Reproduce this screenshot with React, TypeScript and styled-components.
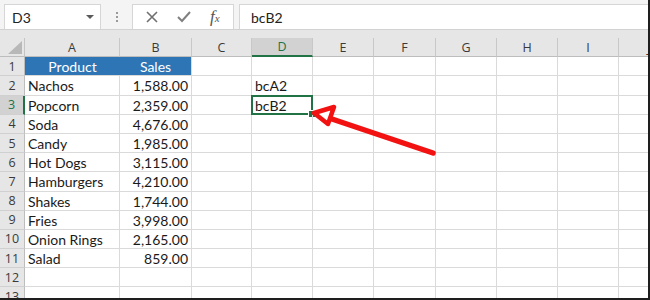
import styled, { createGlobalStyle } from 'styled-components';

const GlobalStyle = createGlobalStyle`
  * { box-sizing: border-box; }
  body {
    margin: 0;
    background: #fff;
    font-family: Lato, "Open Sans", sans-serif;
  }
`;

const columns = ['A', 'B', 'C', 'D', 'E', 'F', 'G', 'H', 'I', 'J'];
const colWidths = [95, 72, 60, 61, 61, 62, 61, 61, 61, 61];

const sales = [
  ['Nachos', '1,588.00'],
  ['Popcorn', '2,359.00'],
  ['Soda', '4,676.00'],
  ['Candy', '1,985.00'],
  ['Hot Dogs', '3,115.00'],
  ['Hamburgers', '4,210.00'],
  ['Shakes', '1,744.00'],
  ['Fries', '3,998.00'],
  ['Onion Rings', '2,165.00'],
  ['Salad', '859.00'],
];

const extra: Record<string, string> = { D2: 'bcA2', D3: 'bcB2' };

export default function App() {
  const rows = Array.from({ length: 13 }, (_, i) => i + 1);

  return (
    <Frame>
      <GlobalStyle />
      <FormulaBar>
        <NameBox>
          D3
          <DropArrow />
        </NameBox>
        <Grip>
          <span />
          <span />
          <span />
        </Grip>
        <ButtonGroup>
          <svg width="12" height="12" viewBox="0 0 12 12">
            <path d="M1 1 L11 11 M11 1 L1 11" stroke="#707070" strokeWidth="1.6" fill="none" />
          </svg>
          <svg width="14" height="12" viewBox="0 0 14 12">
            <path d="M1 6 L5 10 L13 1" stroke="#808080" strokeWidth="2" fill="none" />
          </svg>
          <Fx>
            f<sub>x</sub>
          </Fx>
        </ButtonGroup>
        <FormulaInput>bcB2</FormulaInput>
      </FormulaBar>
      <Gap />
      <Sheet $cols={`25px ${colWidths.join('px ')}px`}>
        <Corner>
          <svg width="14" height="13" viewBox="0 0 14 13">
            <polygon points="0,13 14,13 14,0" fill="#b8b8b8" />
          </svg>
        </Corner>
        {columns.map(c => (
          <ColHeader key={c} $selected={c === 'D'}>
            {c}
          </ColHeader>
        ))}
        {rows.map(r => (
          <Row key={r} r={r} />
        ))}
      </Sheet>
      <Arrow width="650" height="300" viewBox="0 0 650 300">
        <line x1="433" y1="153" x2="326" y2="117" stroke="#f21212" strokeWidth="5.5" strokeLinecap="round" />
        <polygon
          points="314,113 334,107 328,124"
          fill="#fff"
          stroke="#f21212"
          strokeWidth="4.5"
          strokeLinejoin="round"
        />
      </Arrow>
    </Frame>
  );
}

function Row({ r }: { r: number }) {
  const item = r >= 2 && r <= 11 ? sales[r - 2] : null;
  return (
    <>
      <RowHeader $selected={r === 3}>{r}</RowHeader>
      {columns.map(c => {
        const ref = `${c}${r}`;
        if (r === 1 && (c === 'A' || c === 'B')) {
          return (
            <TableHead key={ref} $first={c === 'A'}>
              {c === 'A' ? 'Product' : 'Sales'}
            </TableHead>
          );
        }
        let text = extra[ref] ?? '';
        if (item && c === 'A') text = item[0];
        if (item && c === 'B') text = item[1];
        return (
          <Cell key={ref} $right={c === 'B'} $active={ref === 'D3'}>
            {text}
          </Cell>
        );
      })}
    </>
  );
}

const Frame = styled.div`
  position: relative;
  width: 650px;
  height: 300px;
  overflow: hidden;
  border-right: 2px solid #1e1e1e;
  border-bottom: 2px solid #1e1e1e;
  background: #fff;
`;

const FormulaBar = styled.div`
  display: flex;
  align-items: stretch;
  height: 29px;
  padding: 4px 0 0 4px;
  background: #f4f4f4;
`;

const NameBox = styled.div`
  position: relative;
  width: 97px;
  display: flex;
  align-items: center;
  padding-left: 7px;
  background: #fff;
  border: 1px solid #d6d6d6;
  border-bottom: none;
  font-size: 14px;
  color: #222;
`;

const DropArrow = styled.span`
  position: absolute;
  right: 6px;
  top: 10px;
  border-left: 4px solid transparent;
  border-right: 4px solid transparent;
  border-top: 4px solid #5a5a5a;
`;

const Grip = styled.div`
  width: 31px;
  display: flex;
  flex-direction: column;
  align-items: center;
  justify-content: center;
  gap: 2px;

  span {
    width: 2px;
    height: 2px;
    background: #9a9a9a;
  }
`;

const ButtonGroup = styled.div`
  width: 102px;
  display: flex;
  align-items: center;
  justify-content: space-around;
  padding: 0 4px;
  background: #fff;
  border: 1px solid #d6d6d6;
  border-bottom: none;
`;

const Fx = styled.span`
  font-family: "Liberation Serif", serif;
  font-style: italic;
  font-size: 17px;
  color: #555;

  sub {
    font-size: 11px;
    vertical-align: 0;
  }
`;

const FormulaInput = styled.div`
  flex: 1;
  margin-left: 5px;
  display: flex;
  align-items: center;
  padding-left: 11px;
  background: #fff;
  border: 1px solid #d6d6d6;
  border-right: none;
  border-bottom: none;
  font-size: 14px;
  color: #222;
`;

const Gap = styled.div`
  height: 9px;
  background: #e6e6e6;
  border-top: 1px solid #d2d2d2;
`;

const Sheet = styled.div<{ $cols: string }>`
  display: grid;
  grid-template-columns: ${p => p.$cols};
  grid-auto-rows: 19.2px;
`;

const HeaderBase = styled.div`
  display: flex;
  align-items: center;
  justify-content: center;
  background: #e6e6e6;
  font-family: "Open Sans", Lato, sans-serif;
  font-size: 12.5px;
  color: #3a3a3a;
`;

const Corner = styled(HeaderBase)`
  justify-content: flex-end;
  align-items: flex-end;
  padding: 0 2px 2px 0;
  border-right: 1px solid #c4c4c4;
  border-bottom: 1px solid #bdbdbd;
`;

const ColHeader = styled(HeaderBase)<{ $selected?: boolean }>`
  background: ${p => (p.$selected ? '#d2d2d2' : '#e6e6e6')};
  color: ${p => (p.$selected ? '#217346' : '#3a3a3a')};
  border-right: 1px solid #c8c8c8;
  border-bottom: ${p => (p.$selected ? '2px solid #217346' : '1px solid #bdbdbd')};
`;

const RowHeader = styled(HeaderBase)<{ $selected?: boolean }>`
  background: ${p => (p.$selected ? '#d2d2d2' : '#e6e6e6')};
  color: ${p => (p.$selected ? '#217346' : '#3a3a3a')};
  border-right: ${p => (p.$selected ? '2px solid #217346' : '1px solid #bdbdbd')};
  border-bottom: 1px solid #d0d0d0;
`;

const Cell = styled.div<{ $right?: boolean; $active?: boolean }>`
  position: relative;
  display: flex;
  align-items: center;
  justify-content: ${p => (p.$right ? 'flex-end' : 'flex-start')};
  padding: 1px 3px 0 3px;
  border-right: 1px solid #dadada;
  border-bottom: 1px solid #dadada;
  font-size: 14px;
  color: #1a1a1a;
  white-space: nowrap;

  ${p =>
    p.$active &&
    `
    &::before {
      content: '';
      position: absolute;
      inset: -1px -1px -1px -1px;
      border: 2px solid #217346;
    }
    &::after {
      content: '';
      position: absolute;
      right: -4px;
      bottom: -4px;
      width: 6px;
      height: 6px;
      background: #217346;
      border: 1px solid #fff;
    }
  `}
`;

const TableHead = styled.div<{ $first?: boolean }>`
  display: flex;
  align-items: center;
  justify-content: center;
  padding-top: 1px;
  background: #2e75b6;
  border-bottom: 1px solid #dadada;
  border-right: ${p => (p.$first ? 'none' : '1px solid #dadada')};
  font-size: 14px;
  color: #fff;
`;

const Arrow = styled.svg`
  position: absolute;
  left: 0;
  top: 0;
  pointer-events: none;
`;
